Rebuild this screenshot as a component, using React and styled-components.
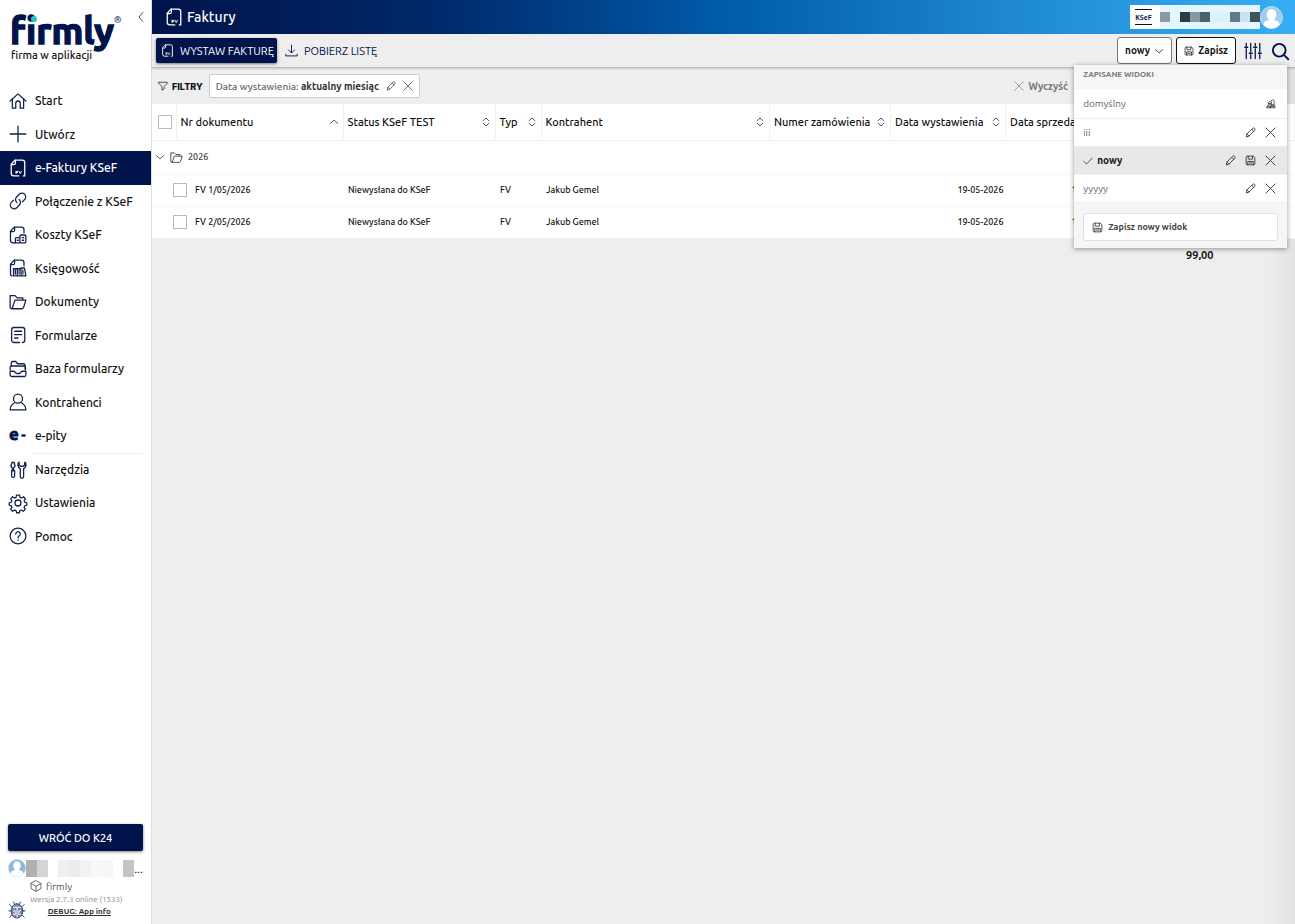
import styled, { createGlobalStyle, css } from "styled-components";

const GlobalStyle = createGlobalStyle`
  * {
    box-sizing: border-box;
  }

  body {
    margin: 0;
    background-color: #eeeeee;
    color: #111111;
    font-family: Ubuntu, "Noto Sans", "Open Sans", sans-serif;
    font-size: 12px;
  }

  button, input {
    font-family: inherit;
    margin: 0;
  }

  button {
    padding: 0;
    border: none;
    background: none;
    color: inherit;
    cursor: pointer;
  }
`;

const navy = "#00134a";

const Page = styled.div`
  display: flex;
  min-height: 100vh;
`;

/* ---------- icons ---------- */

const Svg = styled.svg`
  width: ${({ $size }) => $size || 18}px;
  height: ${({ $size }) => $size || 18}px;
  flex: none;
  display: block;
  overflow: visible;
  fill: none;
  stroke: currentColor;
  stroke-width: ${({ $weight }) => $weight || 1.7};
  stroke-linecap: round;
  stroke-linejoin: round;
`;

const paths = {
  home: (
    <>
      <path d="M1.5 12 12 2.5 22.5 12" />
      <path d="M4.500 9.500V21.500H9V15a3 3 0 0 1 6 0V21.500H19.500V9.500" />
    </>
  ),
  plus: <path d="M12 1.500V22.500M1.500 12H22.500" />,
  invoice: (
    <>
      <path d="M13 22.500H6.500A3.500 3.500 0 0 1 3 19V7L8 1.500H17.500A3.500 3.500 0 0 1 21 5V22.500H19" />
      <path d="M3 7.500H6.500A2 2 0 0 0 8.500 5.500V1.500" />
      <path d="M9.500 16.500V19.500M9.500 16.500H12M9.500 18H11.500M13.500 16.500 15 19.500 16.500 16.500" strokeWidth="1.200" />
    </>
  ),
  link: (
    <g transform="translate(24 0) scale(-1 1) rotate(90 12 12)">
      <path d="M10 13.500a5 5 0 0 0 7.300.4l3.600-3.600a5 5 0 0 0-7.100-7.100L11 6" />
      <path d="M14 10.500a5 5 0 0 0-7.300-.4l-3.600 3.600a5 5 0 0 0 7.100 7.100L13 18" />
    </g>
  ),
  costs: (
    <>
      <path d="M8 22.500H5.500A3.500 3.500 0 0 1 2 19V7L7 1.500H16.500A3.500 3.500 0 0 1 20 5V9" />
      <path d="M2 7.500H5.500A2 2 0 0 0 7.500 5.500V1.500" />
      <path d="M8.500 17A1.500 1.500 0 0 1 10 15.500H14.500V22.500H8.500ZM14.500 13.500A1.500 1.500 0 0 1 16 12H21A1.500 1.500 0 0 1 22.500 13.500V21A1.500 1.500 0 0 1 21 22.500H14.500ZM11 19H12.500M17.500 15.500H19.500M17.500 19H19.500" />
    </>
  ),
  books: (
    <>
      <path d="M4 22.500A2.500 2.500 0 0 1 2 19.500V7L7 1.500H16.500A3.500 3.500 0 0 1 20 5V9" />
      <path d="M2 7.500H5.500A2 2 0 0 0 7.500 5.500V1.500" />
      <path d="M6 13H11V22.500H6ZM11 13H16V22.500H11ZM16 12 20.500 12 22.500 22.500H16ZM8.500 15V20M13.500 15V20M18.500 15V20" />
    </>
  ),
  folder: (
    <path d="M4 21 8 9.500H22.500L19.500 19A3 3 0 0 1 17 21H4A2.500 2.500 0 0 1 1.500 18.500V3.500H8L11 6.500H18.500V9" />
  ),
  form: (
    <>
      <path d="M14 22H6.500A3 3 0 0 1 3.500 19V5A3 3 0 0 1 6.500 2H18A3 3 0 0 1 21 5V19A3 3 0 0 1 18 22" />
      <path d="M7.500 7H17M7.500 11.500H17M7.500 16H12" />
    </>
  ),
  folders: (
    <>
      <path d="M3 8V4A2 2 0 0 1 5 2H9L11.500 5H19A2.500 2.500 0 0 1 21.500 7.500V12" />
      <path d="M1.500 13V10A2 2 0 0 1 3.500 8H20A2 2 0 0 1 22 10V13" />
      <path d="M1.500 15H6.500C8 15 8 18 10.500 18H13.500C16 18 16 15 17.500 15H22.500V20A2 2 0 0 1 20.500 22H4A2.500 2.500 0 0 1 1.500 19.500Z" />
    </>
  ),
  user: (
    <>
      <circle cx="12" cy="7.500" r="6" />
      <path d="M7.500 13C3.500 15 1.500 18 1.500 22.500H22.500C22.500 18 20.500 15 16.500 13" />
    </>
  ),
  tools: (
    <>
      <path d="M4 2H7L8 7 6 9.500V12M4 2 2.500 7 4.500 9.500V12M3.500 13H7.500V20A2 2 0 0 1 3.500 20Z" />
      <path d="M13.500 1.500C11 3 11 8 15 10V20.500A2 2 0 0 0 19.500 20.500V10C23.500 8 23.500 3 21 1.500V5.500L19 7H15.500L13.500 5.500Z" />
    </>
  ),
  gear: (
    <>
      <circle cx="12" cy="12" r="4" />
      <path d="m10 1.500h4l.7 3 2 .9 2.700-1.700 2.400 2.500-1.600 2.800.8 2 2.700.8v3.200l-2.700.8-.9 2.100 1.500 2.600-2.500 2.500-2.600-1.600-2 .8-.7 2.800h-3.600l-.8-2.800-2-.8-2.600 1.600-2.500-2.500 1.500-2.600-.8-2.100-2.700-.8v-3.200l2.700-.8.8-2-1.500-2.800 2.400-2.500 2.700 1.700 2-.9z" />
    </>
  ),
  help: (
    <>
      <circle cx="12" cy="12" r="10.500" />
      <path d="M9 9.500A3 3 0 1 1 13.300 12C12.300 12.600 12 13 12 14.500M12 17.300V17.600" />
    </>
  ),
  down: <path d="M3 8.500 12 16.500 21 8.500" />,
  up: <path d="M3 15.500 12 7.500 21 15.500" />,
  left: <path d="M15.500 3 8 12 15.500 21" />,
  sort: <path d="M5 9 12 2.500 19 9M5 15 12 21.500 19 15" />,
  download: <path d="M12 2V16M6.500 11 12 16.500 17.500 11M1.500 19V22H22.500V19" />,
  filter: <path d="M2 3H22V6L15 13V19L9.500 22V13L2 6Z" />,
  pencil: <path d="M3 21 4.500 15 16.500 3A2.500 2.500 0 0 1 21 7.500L9 19.500ZM14.500 5 19 9.500M4.500 15 9 19.500" />,
  close: <path d="M2 2 22 22M22 2 2 22" />,
  check: <path d="M2 13 8.500 19 22 5" />,
  save: (
    <>
      <path d="M2.500 5A2.500 2.500 0 0 1 5 2.500H18L21.500 6V19A2.500 2.500 0 0 1 19 21.500H5A2.500 2.500 0 0 1 2.500 19Z" />
      <path d="M7 2.500V9H16.500V2.500M6 21.500V14H18V21.500M9 17.500H15" />
    </>
  ),
  tune: (
    <path d="M3 2V5M3 9V22M9 2V13M9 17V22M15 2V5M15 9V22M21 2V13M21 17V22M1 7H5M7 15H11M13 7H17M19 15H23" />
  ),
  search: (
    <>
      <circle cx="11" cy="11" r="8.500" />
      <path d="M17.500 17.500 23 23" />
    </>
  ),
  people: (
    <path d="M2 21H22L20 15 16 13.500 12 15 10.500 21M13 9A4 4 0 1 1 19 9A4 4 0 1 1 13 9M2 21 4.500 14.500 10 13M9 5 5 11H12M5 17.500H19" />
  ),
  cube: <path d="M12 1.500 22 7V17L12 22.500 2 17V7ZM2 7 12 12.500 22 7M12 12.500V22.500" />,
};

const Icon = ({ name, size, weight }) => (
  <Svg viewBox="0 0 24 24" $size={size} $weight={weight} aria-hidden="true">
    {paths[name]}
  </Svg>
);

const Avatar = ({ size, color }) => (
  <Svg viewBox="0 0 24 24" $size={size} aria-hidden="true">
    <circle cx="12" cy="12" r="11.500" fill={color} stroke="#c4dcec" strokeWidth="1" />
    <path d="M3.500 19.500C4 15.500 7 14.500 12 14.500S20 15.500 20.500 19.500A11 11 0 0 1 3.500 19.500Z" fill="#ffffff" stroke="none" />
    <ellipse cx="12" cy="9" rx="5" ry="6" fill="#ffffff" stroke="none" />
  </Svg>
);

/* ---------- sidebar ---------- */

const Sidebar = styled.aside`
  width: 152px;
  flex: none;
  display: flex;
  flex-direction: column;
  background-color: #ffffff;
  border-right: 1px solid #dddddd;
`;

const SidebarTop = styled.div`
  height: 84px;
  padding: 11px 4px 0 10px;
  display: flex;
  justify-content: space-between;
  align-items: flex-start;
`;

const Brand = styled.svg`
  width: 116px;
  height: 54px;
  display: block;
  overflow: visible;
`;

const Menu = styled.nav`
  height: 469px;
  display: grid;
  grid-auto-rows: 1fr;
`;

const MenuItem = styled.div`
  display: flex;
  flex-direction: column;
`;

const MenuLink = styled.a`
  flex: 1;
  padding: 0 9px;
  display: flex;
  align-items: center;
  gap: 8px;
  color: ${({ $active }) => ($active ? "#ffffff" : "#111111")};
  background-color: ${({ $active }) => ($active ? navy : "transparent")};
  font-size: 12px;
  font-weight: 500;
  white-space: nowrap;
  text-decoration: none;

  svg {
    color: ${({ $active }) => ($active ? "#ffffff" : "#14214a")};
  }
`;

const MenuLine = styled.hr`
  width: 112px;
  height: 1px;
  margin: 0 8px 0 auto;
  border: none;
  background-color: #eeeeee;
`;

const SidebarBottom = styled.div`
  margin-top: auto;
  padding: 0 8px 5px;
`;

const BackBtn = styled.button`
  width: 100%;
  height: 27px;
  border-radius: 2px;
  background-color: ${navy};
  box-shadow: 0 1px 3px rgba(0, 0, 0, 0.5);
  color: #ffffff;
  font-size: 11px;
  font-weight: 500;
`;

const Account = styled.div`
  height: 18px;
  margin-top: 8px;
  display: flex;
  align-items: center;
`;

const Mosaic = styled.div`
  display: flex;
  flex: 1;
  height: ${({ $height }) => $height}px;
  padding: ${({ $band }) => $band || 0}px 0;
  background-color: #e4f6fb;
`;

const MosaicCell = styled.span`
  flex: 1;
  background-color: ${({ $color }) => $color};
`;

const AppName = styled.div`
  height: 18px;
  padding-left: 22px;
  display: flex;
  align-items: center;
  gap: 4px;
  color: #555555;
  font-size: 10px;
`;

const Version = styled.div`
  display: flex;
  align-items: flex-end;
`;

const VersionText = styled.div`
  padding-left: 4px;
  color: #888888;
  font-size: 8px;
  line-height: 10px;
  text-align: center;
  white-space: nowrap;
`;

const DebugLink = styled.a`
  display: block;
  padding-left: 6px;
  color: #333333;
  font-size: 8px;
  font-weight: bold;
  line-height: 14px;
`;

/* ---------- main ---------- */

const Main = styled.main`
  flex: 1;
  min-width: 0;
  background: linear-gradient(to left, #e2e2e2, #eeeeee 28px);
`;

const TitleBar = styled.header`
  height: 34px;
  padding: 0 12px 0 13px;
  display: flex;
  align-items: center;
  background: linear-gradient(to right, #00134a, #00296a 25%, #005baa 50%, #1e88d2 75%, #36aef5);
  color: #ffffff;
`;

const Title = styled.h1`
  margin: 0 0 0 4px;
  flex: 1;
  font-size: 14px;
  font-weight: 500;
`;

const Company = styled.div`
  width: 130px;
  height: 24px;
  display: flex;
  align-items: center;
  background-color: #ffffff;
`;

const Ksef = styled.span`
  width: 17px;
  margin: 0 8px 0 5px;
  display: flex;
  justify-content: center;
  border-top: 1px solid ${navy};
  border-bottom: 1px solid ${navy};
  color: ${navy};
  font-size: 7px;
  font-weight: bold;
  line-height: 14px;
`;

const Toolbar = styled.div`
  height: 34px;
  padding: 0 6px 0 4px;
  display: flex;
  align-items: center;
  background-color: #eeeeee;
  border-bottom: 1px solid #bbbbbb;
  box-shadow: 0 1px 2px rgba(0, 0, 0, 0.15);
`;

const ToolBtn = styled.button`
  height: 25px;
  padding: 0 3px 0 5px;
  margin-right: 3px;
  display: flex;
  align-items: center;
  gap: 6px;
  border-radius: 2px;
  color: ${navy};
  font-size: 11px;

  ${({ $primary }) =>
    $primary &&
    css`
      background-color: ${navy};
      box-shadow: 0 1px 3px rgba(0, 0, 0, 0.5);
      color: #ffffff;
    `}
`;

const Spacer = styled.div`
  flex: 1;
`;

const ViewPicker = styled.div`
  position: relative;
  margin-right: 4px;
`;

const OutlineBtn = styled.button`
  height: 27px;
  padding: 0 7px;
  display: flex;
  align-items: center;
  gap: 4px;
  border: 1px solid ${({ $strong }) => ($strong ? "#111111" : "#777777")};
  border-radius: 3px;
  background-color: #ffffff;
  font-size: 10px;
  font-weight: bold;
`;

const IconBtn = styled.button`
  margin-left: ${({ $gap }) => $gap || 0}px;
  display: flex;
  justify-content: center;
  color: ${({ $color }) => $color || "#333333"};
`;

const Filters = styled.div`
  height: 36px;
  padding: 0 8px 0 6px;
  display: flex;
  align-items: center;
  gap: 4px;
`;

const FilterLabel = styled.strong`
  margin-right: 2px;
  font-family: Inter, sans-serif;
  font-size: 9px;
  font-weight: 800;
`;

const Chip = styled.div`
  height: 24px;
  padding: 0 6px;
  display: flex;
  align-items: center;
  gap: 7px;
  border: 1px solid #cccccc;
  border-radius: 2px;
  background-color: #ffffff;
  color: #666666;
  font-size: 10px;
  font-weight: 500;

  strong {
    color: #333333;
  }
`;

const ClearBtn = styled.button`
  margin-right: 219px;
  display: flex;
  align-items: center;
  gap: 4px;
  color: #777777;
  font-size: 10px;
  font-weight: bold;
`;

const Table = styled.table`
  width: 100%;
  table-layout: fixed;
  border-collapse: collapse;
`;

const Col = styled.col`
  width: ${({ $width }) => ($width ? `${$width}px` : "auto")};
`;

const HeadRow = styled.tr`
  height: 36px;
  background-color: #ffffff;
  border-bottom: 1px solid #eeeeee;
`;

const Th = styled.th`
  padding: 0 4px;
  border-right: 1px solid #f2f2f2;
  font-size: 11px;
  font-weight: 500;
  text-align: left;
  white-space: nowrap;

  &:first-child {
    padding-left: 6px;
  }
`;

const HeadCell = styled.div`
  display: flex;
  align-items: center;
  justify-content: space-between;
`;

const Row = styled.tr`
  height: ${({ $height }) => $height || 32}px;
  background-color: #ffffff;
  border-bottom: 1px solid #f6f6f6;
`;

const Td = styled.td`
  padding: 0 ${({ $right }) => ($right ? 2 : 5)}px 0 ${({ $flush }) => ($flush ? 3 : 5)}px;
  color: ${({ $late }) => ($late ? "#a00000" : "#111111")};
  font-size: 9px;
  font-weight: 500;
  text-align: ${({ $right }) => ($right ? "right" : "left")};
  white-space: nowrap;
`;

const RowName = styled.label`
  padding-left: 16px;
  display: flex;
  align-items: center;
  gap: 8px;
`;

const GroupBtn = styled.button`
  display: flex;
  align-items: center;
  gap: 5px;
  color: #444444;
  font-size: 9px;
  font-weight: 500;
`;

const Checkbox = styled.input`
  appearance: none;
  width: 14px;
  height: 14px;
  display: block;
  border: 1px solid #bbbbbb;
  background-color: #ffffff;
`;

const Total = styled.td`
  height: 34px;
  padding: 0 6px 0 0;
  font-size: 11px;
  font-weight: 600;
  text-align: right;
`;

/* ---------- saved views ---------- */

const Dropdown = styled.section`
  position: absolute;
  top: 28px;
  right: -115px;
  z-index: 2;
  width: 213px;
  background-color: #f6f6f6;
  box-shadow: 0 1px 5px rgba(0, 0, 0, 0.4);
`;

const DropdownTitle = styled.h2`
  height: 24px;
  margin: 0;
  padding: 0 9px;
  color: #777777;
  font-size: 8px;
  font-weight: bold;
  line-height: 20px;
`;

const ViewRow = styled.div`
  height: 28px;
  padding: 0 11px 0 9px;
  display: flex;
  align-items: center;
  gap: 9px;
  border-bottom: 1px solid #eeeeee;
  background-color: ${({ $active }) => ($active ? "#e8e8e8" : "#ffffff")};

  &:first-of-type {
    height: 30px;
  }
`;

const ViewName = styled.button`
  flex: 1;
  display: flex;
  align-items: center;
  gap: 4px;
  color: ${({ $active }) => ($active ? "#111111" : "#666666")};
  font-size: 10px;
  font-weight: ${({ $active }) => ($active ? "bold" : "normal")};
`;

const DropdownFooter = styled.div`
  padding: 10px 9px 7px;
`;

const SaveNewBtn = styled.button`
  width: 100%;
  height: 28px;
  padding: 0 8px;
  display: flex;
  align-items: center;
  gap: 5px;
  border: 1px solid #e2e2e2;
  border-radius: 3px;
  background-color: #ffffff;
  color: #444444;
  font-size: 9px;
  font-weight: bold;
`;

const menu = [
  { icon: "home", label: "Start" },
  { icon: "plus", label: "Utwórz" },
  { icon: "invoice", label: "e-Faktury KSeF", active: true },
  { icon: "link", label: "Połączenie z KSeF" },
  { icon: "costs", label: "Koszty KSeF" },
  { icon: "books", label: "Księgowość" },
  { icon: "folder", label: "Dokumenty" },
  { icon: "form", label: "Formularze" },
  { icon: "folders", label: "Baza formularzy" },
  { icon: "user", label: "Kontrahenci" },
  { icon: "epity", label: "e-pity" },
  { icon: "tools", label: "Narzędzia", line: true },
  { icon: "gear", label: "Ustawienia" },
  { icon: "help", label: "Pomoc" },
];

const columns = [
  { label: "Nr dokumentu", sort: "up" },
  { label: "Status KSeF TEST", sort: "sort" },
  { label: "Typ", sort: "sort" },
  { label: "Kontrahent", sort: "sort" },
  { label: "Numer zamówienia", sort: "sort" },
  { label: "Data wystawienia", sort: "sort" },
  { label: "Data sprzedaży", sort: "sort" },
];

const invoices = [
  { id: "FV 1/05/2026", date: "19-05-2026" },
  { id: "FV 2/05/2026", date: "19-05-2026", late: true },
];

const views = [
  { name: "domyślny", actions: ["people"] },
  { name: "iii", actions: ["pencil", "close"] },
  { name: "nowy", actions: ["pencil", "save", "close"], active: true },
  { name: "yyyyy", actions: ["pencil", "close"] },
];

const actionLabels = {
  people: "Udostępnij",
  pencil: "Edytuj",
  save: "Zapisz",
  close: "Usuń",
};

const userCells = ["#b0b0b0", "#d5d5d5", "#ffffff", "#f0f0f0", "#ececec", "#f2f2f2", "#f8f8f8", "#f6f6f6", "#ffffff", "#c4c4c4"];
const companyCells = ["#8a9aa5", "#e4f6fb", "#2a3b47", "#8798a4", "#4c606e", "#d9f3fc", "#d9f3fc", "#64798a", "#c5e4f0", "#3f5361"];

const EpityIcon = () => (
  <Svg viewBox="0 0 18 18" aria-hidden="true">
    <text x="0" y="13" fill={navy} stroke={navy} strokeWidth="0.800" fontSize="17" fontWeight="700">
      e
    </text>
    <path d="M13.500 8.500H15.500" strokeWidth="2.500" />
  </Svg>
);

const LogoName = styled.text`
  fill: ${navy};
  stroke: ${navy};
  stroke-width: 1.5;
  font-size: 37px;
  font-weight: 700;
  font-variant-ligatures: none;
`;

const Logo = () => (
  <Brand viewBox="0 0 116 54" role="img" aria-label="firmly firma w aplikacji">
    <LogoName x="0" y="33">
      firmly
    </LogoName>
    <circle cx="24" cy="8" r="3" fill="#22c7bd" />
    <text x="104" y="12" fill={navy} fontSize="9">
      ®
    </text>
    <text x="1" y="48" fill="#111111" fontSize="11" fontWeight="500">
      firma w aplikacji
    </text>
  </Brand>
);

const Bug = () => (
  <Svg viewBox="0 0 18 20" $size={18} $weight={1} color="#26345f" aria-hidden="true">
    <path d="M6 3 5 1M12 3 13 1M3 6 1 4M15 6 17 4M2 11H0M16 11H18M3 16 1 18M15 16 17 18" />
    <ellipse cx="9" cy="11" rx="6.500" ry="8" fill="#7d8bb0" />
    <path d="M5 7H13M9 7V18M5 11H7V15H5M13 11H11V15H13" stroke="#ffffff" />
  </Svg>
);

const SidebarPanel = () => (
  <Sidebar>
    <SidebarTop>
      <Logo />
      <IconBtn aria-label="Zwiń menu">
        <Icon name="left" size={12} />
      </IconBtn>
    </SidebarTop>
    <Menu>
      {menu.map(({ icon, label, active, line }) => (
        <MenuItem key={label}>
          {line && <MenuLine />}
          <MenuLink href="#" $active={active}>
            {icon === "epity" ? <EpityIcon /> : <Icon name={icon} />}
            {label}
          </MenuLink>
        </MenuItem>
      ))}
    </Menu>
    <SidebarBottom>
      <BackBtn>WRÓĆ DO K24</BackBtn>
      <Account>
        <Avatar size={18} color="#8ab9dc" />
        <Mosaic $height={17}>
          {userCells.map((color, i) => (
            <MosaicCell key={i} $color={color} />
          ))}
        </Mosaic>
        ...
      </Account>
      <AppName>
        <Icon name="cube" size={12} />
        firmly
      </AppName>
      <Version>
        <Bug />
        <VersionText>
          Wersja 2.7.3 online (1533)
          <DebugLink href="#">DEBUG: App info</DebugLink>
        </VersionText>
      </Version>
    </SidebarBottom>
  </Sidebar>
);

const SavedViews = () => (
  <Dropdown>
    <DropdownTitle>ZAPISANE WIDOKI</DropdownTitle>
    {views.map(({ name, actions, active }) => (
      <ViewRow key={name} $active={active}>
        <ViewName $active={active}>
          {active && <Icon name="check" size={10} />}
          {name}
        </ViewName>
        {actions.map((action) => (
          <IconBtn key={action} aria-label={`${actionLabels[action]} ${name}`}>
            <Icon name={action} size={action === "people" ? 10 : 11} weight={2} />
          </IconBtn>
        ))}
      </ViewRow>
    ))}
    <DropdownFooter>
      <SaveNewBtn>
        <Icon name="save" size={11} weight={2} />
        Zapisz nowy widok
      </SaveNewBtn>
    </DropdownFooter>
  </Dropdown>
);

const InvoiceTable = () => (
  <Table>
    <colgroup>
      <Col $width={24} />
      <Col $width={167} />
      <Col $width={152} />
      <Col $width={46} />
      <Col />
      <Col $width={121} />
      <Col $width={115} />
      <Col $width={114} />
      <Col $width={100} />
      <Col $width={75} />
    </colgroup>
    <thead>
      <HeadRow>
        <Th>
          <Checkbox type="checkbox" aria-label="Zaznacz wszystkie" />
        </Th>
        {columns.map(({ label, sort }) => (
          <Th key={label}>
            <HeadCell>
              {label}
              <Icon name={sort} size={10} />
            </HeadCell>
          </Th>
        ))}
        <Th />
        <Th />
      </HeadRow>
    </thead>
    <tbody>
      <Row $height={34}>
        <Td $flush colSpan={10}>
          <GroupBtn>
            <Icon name="down" size={10} weight={2} />
            <Icon name="folder" size={13} />
            2026
          </GroupBtn>
        </Td>
      </Row>
      {invoices.map(({ id, date, late }) => (
        <Row key={id}>
          <Td colSpan={2}>
            <RowName>
              <Checkbox type="checkbox" />
              {id}
            </RowName>
          </Td>
          <Td>Niewysłana do KSeF</Td>
          <Td>FV</Td>
          <Td>Jakub Gemel</Td>
          <Td />
          <Td $right>{date}</Td>
          <Td $right $late={late}>
            {date}
          </Td>
          <Td colSpan={2} />
        </Row>
      ))}
    </tbody>
    <tfoot>
      <tr>
        <Total colSpan={9}>99,00</Total>
        <td />
      </tr>
    </tfoot>
  </Table>
);

export default function App() {
  return (
    <Page>
      <GlobalStyle />
      <SidebarPanel />
      <Main>
        <TitleBar>
          <Icon name="invoice" />
          <Title>Faktury</Title>
          <Company>
            <Ksef>KSeF</Ksef>
            <Mosaic $height={24} $band={7}>
              {companyCells.map((color, i) => (
                <MosaicCell key={i} $color={color} />
              ))}
            </Mosaic>
          </Company>
          <Avatar size={23} color="#9fcdec" />
        </TitleBar>
        <Toolbar>
          <ToolBtn $primary>
            <Icon name="invoice" size={13} />
            WYSTAW FAKTURĘ
          </ToolBtn>
          <ToolBtn>
            <Icon name="download" size={13} />
            POBIERZ LISTĘ
          </ToolBtn>
          <Spacer />
          <ViewPicker>
            <OutlineBtn aria-expanded="true">
              nowy
              <Icon name="down" size={10} />
            </OutlineBtn>
            <SavedViews />
          </ViewPicker>
          <OutlineBtn $strong>
            <Icon name="save" size={10} />
            Zapisz
          </OutlineBtn>
          <IconBtn $gap={8} $color={navy} aria-label="Kolumny">
            <Icon name="tune" size={18} />
          </IconBtn>
          <IconBtn $gap={9} $color={navy} aria-label="Szukaj">
            <Icon name="search" size={18} weight={2.5} />
          </IconBtn>
        </Toolbar>
        <Filters>
          <Icon name="filter" size={10} />
          <FilterLabel>FILTRY</FilterLabel>
          <Chip>
            <span>
              Data wystawienia: <strong>aktualny miesiąc</strong>
            </span>
            <IconBtn aria-label="Edytuj filtr">
              <Icon name="pencil" size={10} />
            </IconBtn>
            <IconBtn aria-label="Usuń filtr">
              <Icon name="close" size={10} />
            </IconBtn>
          </Chip>
          <Spacer />
          <ClearBtn>
            <Icon name="close" size={10} />
            Wyczyść
          </ClearBtn>
        </Filters>
        <InvoiceTable />
      </Main>
    </Page>
  );
}
